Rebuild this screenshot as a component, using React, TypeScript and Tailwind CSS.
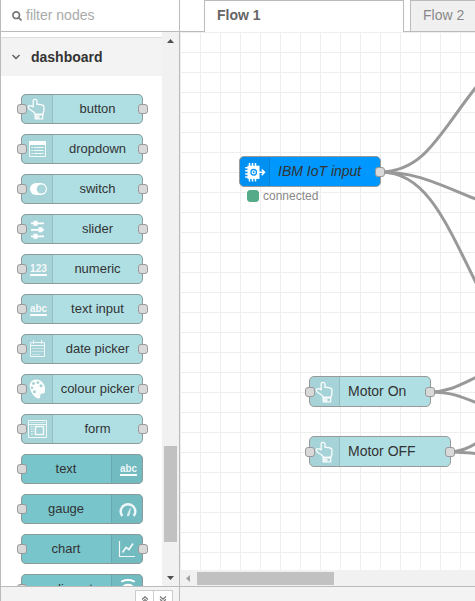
import React from 'react';

type IconName =
  | 'hand' | 'dropdown' | 'switch' | 'slider' | 'numeric' | 'abc' | 'date'
  | 'palette' | 'form' | 'gauge' | 'chart' | 'wifi' | 'iot';

function Icon({ name }: { name: IconName }) {
  const frame = 'block h-[30px] w-[30px] shrink-0';
  const common = { viewBox: '0 0 30 30', className: frame, fill: 'none', stroke: '#fff' };
  switch (name) {
    case 'hand':
      return (
        <svg {...common} strokeWidth="1.3" strokeLinejoin="round" strokeOpacity=".95">
          <path d="M13.200 20.500L12 18.200 7.500 15.200Q5.600 13.200 6.700 12 7.500 11.300 9 11.800L11.200 12.800V7.200Q11.200 5.400 13.100 5.400T15 7.200V10.400Q16.200 9.900 17.300 10.600 18.600 10.100 19.600 11 21.800 10.900 21.900 13V17.200L20.700 20.500Z" />
          <path d="M13.200 20.500h7.500v4.300h-7.500z" />
          <path d="M13.500 21.500h4v3h-4z" fill="#fff" fillOpacity=".8" stroke="none" />
        </svg>
      );
    case 'dropdown':
      return (
        <svg {...common} strokeWidth="1" strokeOpacity=".85">
          <path d="M7.500 7.500h16v15h-16z" />
          <path d="M7 7h17v4H7z" fill="#fff" stroke="none" />
          <path d="M9.500 13.500h1.500m1 0h9.500m-12 3h1.500m1 0h9.500m-12 3h1.500m1 0h9.500" />
        </svg>
      );
    case 'switch':
      return (
        <svg {...common}>
          <rect x="8" y="9" width="17" height="12" rx="6" fill="#fff" stroke="none" />
          <circle cx="19.300" cy="15" r="4.600" fill="#a8d5d9" stroke="none" />
        </svg>
      );
    case 'slider':
      return (
        <svg {...common} strokeWidth="1.700">
          <path d="M9 9.300h13M9 15.800h13M9 22.300h13" />
          <path d="M13.500 6.800v5M18.500 13.300v5M13.500 19.800v5" strokeWidth="4" />
        </svg>
      );
    case 'numeric':
    case 'abc':
      return (
        <svg {...common}>
          <text x="16.500" y="18" textAnchor="middle" textLength="17" lengthAdjust="spacingAndGlyphs" fill="#fff" stroke="none" className="text-[10.5px] font-bold font-['Liberation_Sans',sans-serif]" opacity=".87">
            {name === 'numeric' ? '123' : 'abc'}
          </text>
          <path d="M8 21h17" strokeWidth="2" strokeOpacity=".95" />
        </svg>
      );
    case 'date':
      return (
        <svg {...common} strokeWidth="1" strokeOpacity=".82">
          <path d="M8.500 8.500h14v14h-14zM8.500 11.500h14M11.500 6v4M19.500 6v4" />
          <path d="M10.500 14.500h11M10.500 17.500h11M10.500 20.500h8" strokeDasharray="1 1" />
        </svg>
      );
    case 'palette':
      return (
        <svg {...common} stroke="none">
          <path d="M14 5.500C8.500 5.500 6.500 11 8.500 16c1.800 5 5.500 8.900 8.500 8.500 2-.3.600-2.800 1.700-4.300 1.200-1.500 3.400.2 4.100-1.900C24.500 11.500 20 5.500 14 5.500z" fill="#fff" fillOpacity=".96" />
          <g fill="#a5d1d5"><circle cx="10" cy="13.700" r="1.300" /><circle cx="11.500" cy="9.500" r="1.400" /><circle cx="15.800" cy="8.600" r="1.400" /><circle cx="19" cy="11.800" r="1.500" /><circle cx="12.500" cy="17.800" r="1.500" /></g>
        </svg>
      );
    case 'form':
      return (
        <svg {...common} strokeWidth="1" strokeOpacity=".85">
          <path d="M6.500 6.500h18v17h-18zM6.500 10.500h18" />
          <path d="M8 8.500h15" strokeOpacity=".45" />
          <path d="M13.500 12.500h8v8h-8z" strokeWidth="1.500" />
          <path d="M9 12.500h2.500M9 15h2.500M9 17.500h2.500M9 20h2.500" strokeDasharray="1.500 .5" />
        </svg>
      );
    case 'gauge':
      return (
        <svg {...common} strokeWidth="2.500" strokeOpacity=".88">
          <path d="M10.300 22A7.300 7.300 0 1 1 21.700 22" />
          <path d="M15.300 22l.5-2.500 2.600-5.300-.7 5.600-1 2.200z" fill="#fff" fillOpacity=".7" strokeWidth=".5" />
        </svg>
      );
    case 'chart':
      return (
        <svg {...common} strokeWidth="1.200" strokeOpacity=".9">
          <path d="M7.500 7v15.500H23" />
          <path d="M10.500 18.500l3.500-5 3 2 4-6" strokeWidth="1.700" />
        </svg>
      );
    case 'wifi':
      return (
        <svg {...common} strokeWidth="2" strokeLinecap="round">
          <path d="M10 7.300q6-2.500 12 0M12 11.800q4-2 8 0" />
        </svg>
      );
    case 'iot':
      return (
        <svg {...common} strokeWidth="1.500">
          <path d="M9.500 6v18.500M12.500 6v18.500M15.500 6v18.500M5.200 10.700h4M5.200 13.800h4M5.200 16.900h4M5.200 20h4" />
          <path d="M7.500 8.700h12v13.200h-12z" fill="#fff" stroke="none" />
          <circle cx="13.700" cy="15.300" r="2.800" stroke="#0797fa" strokeWidth="1.300" />
          <circle cx="13.700" cy="15.300" r="1" fill="#0797fa" stroke="none" />
          <path d="M19 15.300h5M21.700 12.500l2.800 2.800-2.800 2.800" />
        </svg>
      );
  }
}

function Port({ className }: { className: string }) {
  return (
    <span className={`absolute top-[10px] size-[10px] rounded-[3px] border border-[#999] bg-[#d9d9d9] ${className}`} />
  );
}

interface PaletteItem { label: string; icon: IconName; kind: 'input' | 'output'; out?: boolean }

const items: PaletteItem[] = [
  { label: 'button', icon: 'hand', kind: 'input', out: true },
  { label: 'dropdown', icon: 'dropdown', kind: 'input', out: true },
  { label: 'switch', icon: 'switch', kind: 'input', out: true },
  { label: 'slider', icon: 'slider', kind: 'input', out: true },
  { label: 'numeric', icon: 'numeric', kind: 'input', out: true },
  { label: 'text input', icon: 'abc', kind: 'input', out: true },
  { label: 'date picker', icon: 'date', kind: 'input', out: true },
  { label: 'colour picker', icon: 'palette', kind: 'input', out: true },
  { label: 'form', icon: 'form', kind: 'input', out: true },
  { label: 'text', icon: 'abc', kind: 'output' },
  { label: 'gauge', icon: 'gauge', kind: 'output' },
  { label: 'chart', icon: 'chart', kind: 'output', out: true },
  { label: 'audio out', icon: 'wifi', kind: 'output' },
];

function PaletteNode({ item }: { item: PaletteItem }) {
  const output = item.kind === 'output';
  return (
    <div className={`relative flex h-[30px] w-[122px] shrink-0 rounded-[5px] ${output ? 'flex-row-reverse bg-[#78c6cc]' : 'bg-[#afdfe3]'}`}>
      <span className={`flex h-[30px] shrink-0 border-black/10 bg-black/5 ${output ? 'w-8 rounded-r-[5px] border-l' : 'w-8 rounded-l-[5px] border-r pl-px'}`}>
        <Icon name={item.icon} />
      </span>
      <span className={`flex-1 text-center text-[13px] leading-[29px] whitespace-nowrap text-[#333] ${output ? '' : 'pr-px'}`}>{item.label}</span>
      <span className="absolute inset-0 rounded-[5px] border border-[#8d9a9b]" />
      <Port className="-left-[4px]" />
      {item.out && <Port className="-right-[5px]" />}
    </div>
  );
}

function FlowNode({ label, icon, className, input, iot }: { label: string; icon: IconName; className: string; input?: boolean; iot?: boolean }) {
  return (
    <div className={`absolute flex h-[31px] rounded-[5px] border border-[#999] ${iot ? 'bg-[#0098ff] italic' : 'bg-[#afdfe3]'} ${className}`}>
      <span className="flex h-[29px] w-[30px] shrink-0 items-center rounded-l-[4px] border-r border-black/10 bg-black/5">
        <Icon name={icon} />
      </span>
      <span className="pl-[8px] text-[14px] leading-[28px] whitespace-nowrap text-[#333]">{label}</span>
      {input && <Port className="-left-[5px]" />}
      <Port className="-right-[5px]" />
    </div>
  );
}

export default function App() {
  return (
    <div className="flex h-[601px] w-[475px] overflow-hidden bg-white font-['Liberation_Sans',Arial,sans-serif]">
      <aside className="flex w-[180px] shrink-0 flex-col border-x border-[#bbb]">
        <div className="flex h-8 shrink-0 items-center border-b border-[#bbb] pl-[11px] text-[14px] text-[#aaa]">
          <svg viewBox="0 0 10 10" className="mr-1 size-[10px]" fill="none" stroke="#777" strokeWidth="1.700"><circle cx="4.200" cy="4.200" r="3.300" /><path d="M6.500 6.500l3 3" /></svg>
          <span>filter nodes</span>
        </div>
        <div className="flex h-[554px] shrink-0">
          <div className="flex w-[161px] flex-col overflow-hidden pt-[5px]">
            <div className="flex h-[39px] shrink-0 items-center border-t border-[#ddd] bg-[#f3f3f3] pl-[11px] text-[14px] font-bold text-[#333]">
              <svg viewBox="0 0 8 6" className="mr-[11px] h-[6px] w-[8px]" fill="none" stroke="#555" strokeWidth="1.300"><path d="M.5 1L4 4.500 7.500 1" /></svg>
              <span>dashboard</span>
            </div>
            <div className="flex flex-col gap-[10px] pt-[18px] pl-5">
              {items.map((item) => <PaletteNode key={item.label} item={item} />)}
            </div>
          </div>
          <div className="flex w-[17px] flex-col items-center bg-[#f1f1f1]">
            <svg viewBox="0 0 7 4" className="mt-[7px] h-1 w-[7px]" fill="#505050"><path d="M0 4L3.500 0 7 4z" /></svg>
            <div className="mt-[403px] h-[96px] w-[13px] bg-[#c1c1c1]" />
            <svg viewBox="0 0 7 4" className="mt-[34px] h-1 w-[7px]" fill="#505050"><path d="M0 0L3.500 4 7 0z" /></svg>
          </div>
        </div>
        <footer className="flex h-[15px] shrink-0 justify-end border-t border-[#bbb] bg-[#f3f3f3] pt-[3px] pr-[6px]">
          <span className="flex h-5 w-[19px] justify-center border border-[#ccc] bg-white pt-[5px]">
            <svg viewBox="0 0 8 8" className="size-2" fill="none" stroke="#777" strokeWidth="1.200"><path d="M1 3.500l3-2.700 3 2.700M1 6.300l3-2.700 3 2.700" /></svg>
          </span>
          <span className="flex h-5 w-[19px] justify-center border border-l-0 border-[#ccc] bg-white pt-[5px]">
            <svg viewBox="0 0 8 8" className="size-2" fill="none" stroke="#777" strokeWidth="1.200"><path d="M1 .5l3 2.700 3-2.700M1 3.300l3 2.700 3-2.700" /></svg>
          </span>
        </footer>
      </aside>

      <main className="flex w-[295px] flex-col">
        <div className="flex h-8 shrink-0 items-stretch text-[14px] leading-[29px]">
          <div className="w-6 border-b border-[#bbb]" />
          <div className="w-[200px] border-x border-t border-[#bbb] pl-3 font-bold text-[#666]">Flow 1</div>
          <div className="w-[6px] border-b border-[#bbb]" />
          <div className="flex-1 overflow-hidden border-t border-b border-l border-[#bbb] bg-[#f0f0f0] pl-3 whitespace-nowrap text-[#888]">Flow 2</div>
        </div>

        <div className="relative h-[538px] shrink-0 overflow-hidden bg-[linear-gradient(to_right,#eee_1px,transparent_1px),linear-gradient(to_bottom,#eee_1px,transparent_1px)] bg-[size:20px_20px]">
          <svg className="absolute inset-0" width="295" height="538" viewBox="180 32 295 538" fill="none" stroke="#999" strokeWidth="3">
            <path d="M380 172C425 172 440 132 477 86" />
            <path d="M380 172C418 172 440 185 477 199.500" />
            <path d="M380 172C424 172 443 215 477 285" />
            <path d="M430 392C448 392 460 385 477 377" />
            <path d="M430 392C450 392 460 396 477 403" />
            <path d="M450 452C460 452 467 448 477 443" />
            <path d="M450 452C460 452 467 453 477 453.500" />
          </svg>
          <FlowNode label="IBM IoT input" icon="iot" iot className="top-[124px] left-[59px] w-[142px]" />
          <div className="absolute top-[158px] left-[67px] flex h-3 items-center gap-[4px] text-[12px] text-[#888]">
            <span className="size-3 rounded-[3px] border border-[#5a8] bg-[#5a8]" />
            <span>connected</span>
          </div>
          <FlowNode label="Motor On" icon="hand" input className="top-[344px] left-[129px] w-[122px]" />
          <FlowNode label="Motor OFF" icon="hand" input className="top-[404px] left-[129px] w-[142px]" />
        </div>

        <div className="flex h-4 shrink-0 items-center bg-[#f1f1f1] pl-[6px]">
          <svg viewBox="0 0 4 7" className="h-[7px] w-1" fill="#a3a3a3"><path d="M4 0v7L0 3.500z" /></svg>
          <div className="ml-[7px] h-[13px] w-[137px] bg-[#c1c1c1]" />
        </div>
        <div className="flex-1 border-t border-[#bbb] bg-[#f3f3f3]" />
      </main>
    </div>
  );
}
